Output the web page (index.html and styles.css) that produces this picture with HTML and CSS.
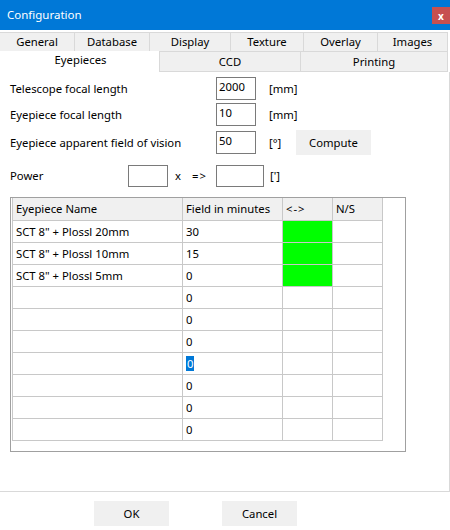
FILE: index.html
```html
<!DOCTYPE html>
<html>
<head>
<meta charset="utf-8">
<link rel="stylesheet" href="styles.css">
</head>
<body>
<div class="window">
  <div class="titlebar">
    <span class="title">Configuration</span>
    <span class="close">x</span>
  </div>
  <div class="tabs">
    <div class="tabrow row1">
      <div class="tab">General</div>
      <div class="tab">Database</div>
      <div class="tab">Display</div>
      <div class="tab">Texture</div>
      <div class="tab">Overlay</div>
      <div class="tab">Images</div>
    </div>
    <div class="tabrow row2">
      <div class="tab active">Eyepieces</div>
      <div class="tab">CCD</div>
      <div class="tab">Printing</div>
    </div>
  </div>
  <div class="page">
    <div class="form">
      <div class="frow r1">
        <span class="label">Telescope focal length</span>
        <span class="input">2000</span>
        <span class="unit">[mm]</span>
      </div>
      <div class="frow r2">
        <span class="label">Eyepiece focal length</span>
        <span class="input">10</span>
        <span class="unit">[mm]</span>
      </div>
      <div class="frow r3">
        <span class="label">Eyepiece apparent field of vision</span>
        <span class="input">50</span>
        <span class="unit short">[°]</span>
        <span class="btn compute">Compute</span>
      </div>
      <div class="frow r4">
        <span class="plabel">Power</span>
        <span class="input pin"></span>
        <span class="px">x</span>
        <span class="arrow">=&gt;</span>
        <span class="input pout"></span>
        <span class="unit">[']</span>
      </div>
    </div>
    <div class="gridwrap">
      <table class="grid">
        <colgroup><col class="c1"><col class="c2"><col class="c3"><col class="c4"></colgroup>
        <thead>
          <tr><th>Eyepiece Name</th><th>Field in minutes</th><th class="lr">&lt;-&gt;</th><th>N/S</th></tr>
        </thead>
        <tbody>
          <tr><td>SCT 8" + Plossl 20mm</td><td>30</td><td class="green"></td><td></td></tr>
          <tr><td>SCT 8" + Plossl 10mm</td><td>15</td><td class="green"></td><td></td></tr>
          <tr><td>SCT 8" + Plossl 5mm</td><td>0</td><td class="green"></td><td></td></tr>
          <tr><td></td><td>0</td><td></td><td></td></tr>
          <tr><td></td><td>0</td><td></td><td></td></tr>
          <tr><td></td><td>0</td><td></td><td></td></tr>
          <tr><td></td><td><span class="sel">0</span></td><td></td><td></td></tr>
          <tr><td></td><td>0</td><td></td><td></td></tr>
          <tr><td></td><td>0</td><td></td><td></td></tr>
          <tr><td></td><td>0</td><td></td><td></td></tr>
        </tbody>
      </table>
    </div>
  </div>
  <div class="buttons">
    <span class="btn ok">OK</span>
    <span class="btn cancel">Cancel</span>
  </div>
</div>
</body>
</html>
```
FILE: styles.css
```css
* { box-sizing: border-box; }
html, body {
  margin: 0;
  padding: 0;
  background: #ffffff;
}
body {
  font-family: "Noto Sans", "Open Sans", sans-serif;
  font-size: 11.3px;
  color: #000;
  width: 450px;
  height: 530px;
  overflow: hidden;
}
.window {
  width: 450px;
  height: 530px;
  display: flex;
  flex-direction: column;
}
.titlebar {
  height: 30px;
  background: #0078d7;
  color: #fff;
  display: flex;
  align-items: center;
  justify-content: space-between;
  padding-left: 7px;
}
.title {
  font-size: 11.5px;
  line-height: 16px;
}
.close {
  width: 18px;
  height: 17px;
  background: #c75050;
  color: #fff;
  font-size: 10px;
  font-weight: bold;
  display: flex;
  align-items: center;
  justify-content: center;
  align-self: flex-start;
  margin-top: 7px;
  line-height: 1;
}
.tabs {
  margin-top: 2px;
  width: 449px;
}
.tabrow {
  display: grid;
  width: 448px;
}
.row1 {
  grid-template-columns: 74px 75px 81px 73px 74px 71px;
  height: 19px;
}
.row2 {
  grid-template-columns: 159px 141px 148px;
  height: 21px;
}
.tab {
  background: #f0f0f0;
  border-top: 1px solid #d9d9d9;
  border-left: 1px solid #d9d9d9;
  display: flex;
  align-items: center;
  justify-content: center;
  line-height: 16px;
}
.row1 .tab:first-child { border-left: none; }
.row1 .tab:last-child { border-right: 1px solid #d9d9d9; }
.row2 .tab { border-bottom: 1px solid #d9d9d9; }
.row2 .tab:last-child { border-right: 1px solid #d9d9d9; }
.row2 .tab.active {
  background: #fff;
  border-left: none;
  border-bottom: none;
  border-top-color: #fff;
  padding-bottom: 4px;
  padding-left: 2px;
}
.page {
  width: 450px;
  height: 420px;
  border-right: 1px solid #d9d9d9;
  border-bottom: 1px solid #d9d9d9;
  background: #fff;
  display: flex;
  flex-direction: column;
}
.form {
  padding-left: 10px;
  display: flex;
  flex-direction: column;
}
.frow {
  display: flex;
  align-items: center;
}
.r1 { margin-top: 5px; height: 23px; }
.r2 { margin-top: 3px; height: 23px; }
.r3 { margin-top: 4px; height: 25px; }
.r4 { margin-top: 9px; height: 23px; }
.label {
  width: 206px;
}
.input {
  width: 40px;
  height: 23px;
  border: 1px solid #7a7a7a;
  background: #fff;
  padding: 0 0 0 2px;
  line-height: 17px;
}
.unit {
  margin-left: 13px;
}
.unit.short { width: 14px; }
.btn {
  display: inline-flex;
  align-items: center;
  justify-content: center;
  background: #f0f0f0;
  width: 75px;
  height: 25px;
}
.compute { margin-left: 13px; }
.plabel { width: 118px; }
.pin { height: 22px; }
.px { margin-left: 7px; width: 17px; }
.arrow { width: 24px; letter-spacing: 1px; }
.pout { width: 48px; height: 22px; }
.r4 .unit { margin-left: 6px; }
.gridwrap {
  margin: 10px 0 0 10px;
  width: 396px;
  height: 255px;
  border: 1px solid #a0a0a0;
  padding-left: 1px;
}
.grid {
  border-collapse: collapse;
  table-layout: fixed;
  width: 371px;
}
.c1 { width: 170px; }
.c2 { width: 100px; }
.c3 { width: 50px; }
.c4 { width: 50px; }
.grid th, .grid td {
  border: 1px solid #c8c8c8;
  height: 22px;
  padding: 0 0 0 3px;
  text-align: left;
  font-weight: normal;
  white-space: nowrap;
  overflow: hidden;
}
.grid thead th {
  background: #f0f0f0;
  border-top: none;
}
.grid th.lr { letter-spacing: 1px; }
.grid td.green { background: #00ff00; }
.sel {
  background: #0078d7;
  color: #fff;
  padding: 0 1px;
}
.buttons {
  display: flex;
  padding-left: 94px;
  gap: 53px;
  margin-top: 9px;
}
```
